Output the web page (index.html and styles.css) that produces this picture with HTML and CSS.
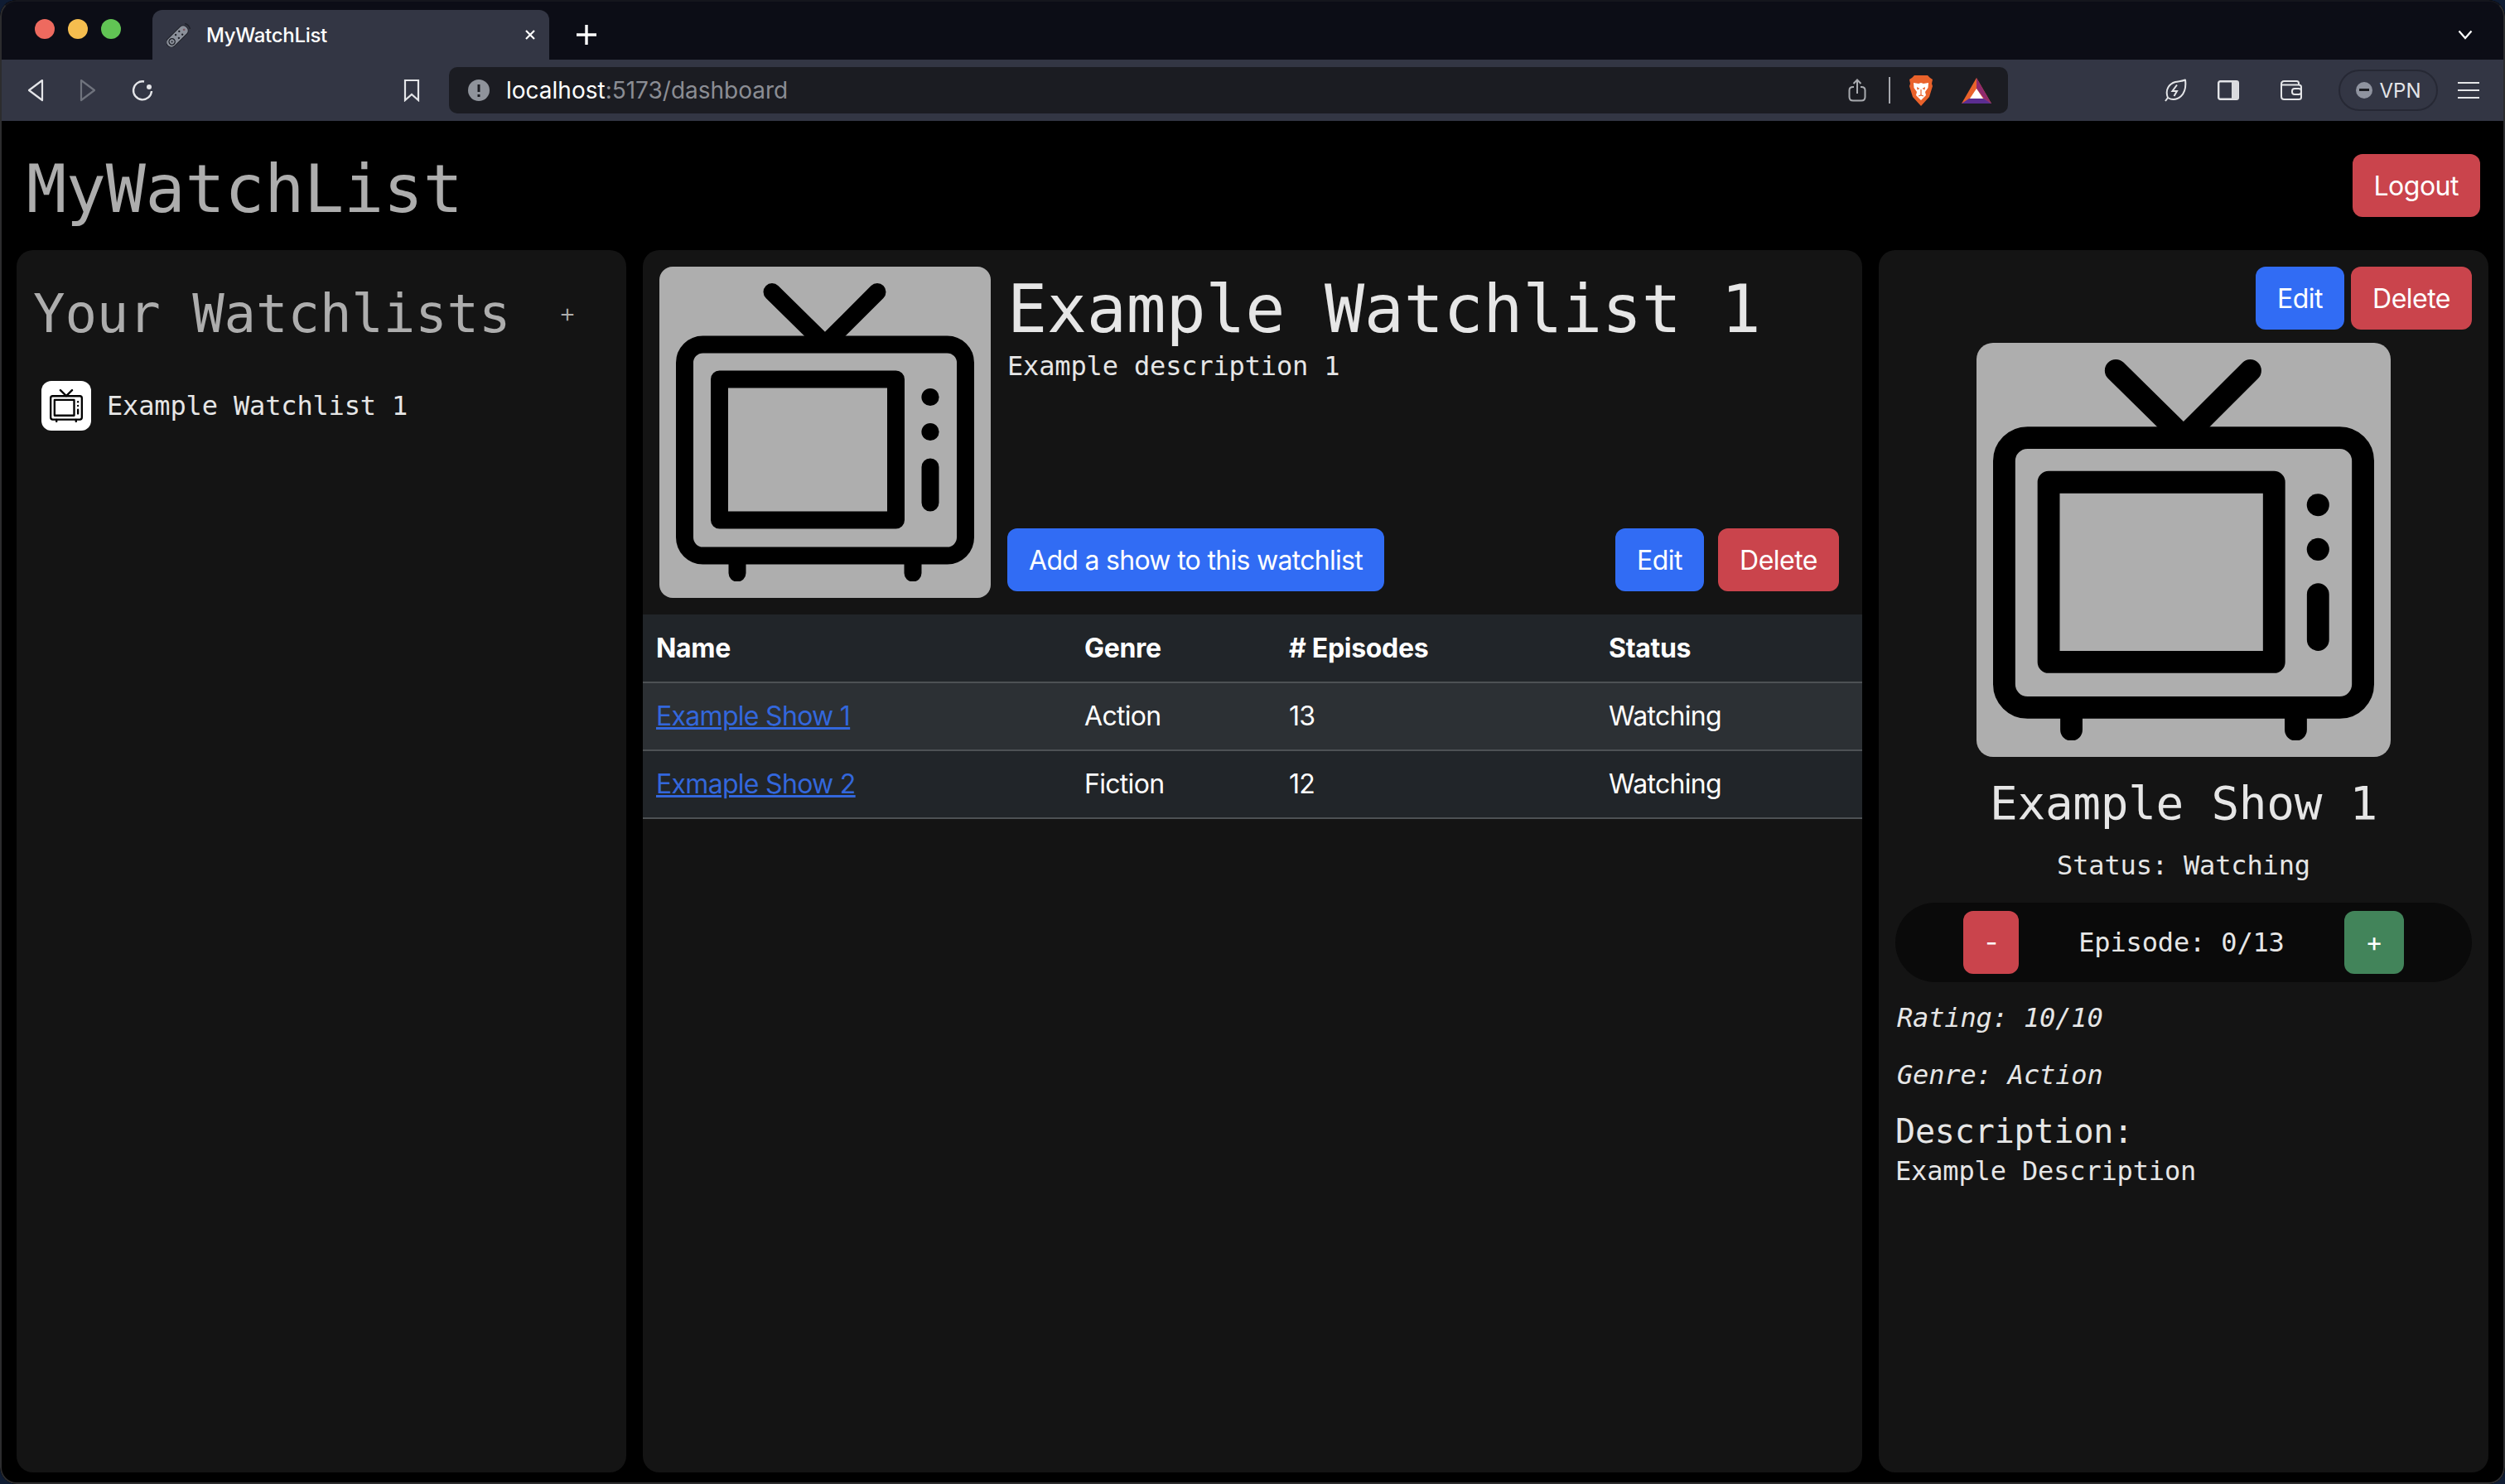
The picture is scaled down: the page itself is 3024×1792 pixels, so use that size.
FILE: index.html
```html
<!DOCTYPE html>
<html lang="en">

<head>
    <title>MyWatchList</title>
    <meta charset="utf-8">
    <link rel="stylesheet" href="styles.css">
</head>

<body>
    <svg class="defs" width="0" height="0">
        <symbol id="tv" viewBox="20 19.5 360 360">
            <g fill="none" stroke="#000" stroke-width="21" stroke-linecap="round" stroke-linejoin="round">
                <path d="M136 30 L200 93 L263 30" />
                <rect x="30.5" y="93.5" width="339" height="255" rx="22" />
                <rect x="72.5" y="135.5" width="213" height="170" />
                <path d="M327 241.5 V284.5 M94 352 V369.5 M306 352 V369.5" />
            </g>
            <circle cx="327" cy="157" r="10.6" />
            <circle cx="327" cy="199" r="10.6" />
        </symbol>
    </svg>

    <div class="window">
        <div class="tabstrip">
            <div class="lights">
                <span class="light red"></span>
                <span class="light yellow"></span>
                <span class="light green"></span>
            </div>
            <div class="tab">
                <svg class="tab-icon" width="30" height="30" viewBox="0 0 30 30">
                    <g transform="rotate(45 13 17)">
                        <rect x="7" y="1" width="12" height="32" rx="5.5" fill="#8b909a" stroke="#1f2129" stroke-width="1" />
                        <circle cx="13" cy="26" r="3.6" fill="none" stroke="#1f2129" stroke-width="1.4" />
                        <circle cx="13" cy="26" r="1" fill="#1f2129" />
                        <circle cx="10.3" cy="17" r="1.2" fill="#1f2129" />
                        <circle cx="15.7" cy="17" r="1.2" fill="#1f2129" />
                        <circle cx="10.3" cy="11" r="1.2" fill="#1f2129" />
                        <circle cx="15.7" cy="11" r="1.2" fill="#1f2129" />
                        <circle cx="13" cy="5.5" r="1.4" fill="#7a5560" />
                    </g>
                    <path d="M22 1.5 Q27 2.5 28.5 8" fill="none" stroke="#1f2129" stroke-width="1.4" />
                </svg>
                <span class="tab-title">MyWatchList</span>
                <svg class="tab-close" width="14" height="14" viewBox="0 0 14 14">
                    <path d="M2 2 L12 12 M12 2 L2 12" stroke="#fff" stroke-width="2.2" />
                </svg>
            </div>
            <svg class="new-tab" width="24" height="24" viewBox="0 0 24 24">
                <path d="M12 0 V24 M0 12 H24" stroke="#fff" stroke-width="3.4" />
            </svg>
            <svg class="tab-chevron" width="18" height="12" viewBox="0 0 18 12">
                <path d="M1.5 1.5 L9 10 L16.5 1.5" fill="none" stroke="#fff" stroke-width="2.2" />
            </svg>
        </div>

        <div class="toolbar">
            <div class="nav-buttons">
                <svg width="22" height="28" viewBox="0 0 22 28">
                    <path d="M19 2 L3 14 L19 26 Z" fill="none" stroke="#e4e5e8" stroke-width="2.2" stroke-linejoin="round" />
                </svg>
                <svg width="22" height="28" viewBox="0 0 22 28">
                    <path d="M3 2 L19 14 L3 26 Z" fill="none" stroke="#6f737d" stroke-width="2.2" stroke-linejoin="round" />
                </svg>
                <svg width="28" height="28" viewBox="0 0 28 28">
                    <path d="M16 3.5 A11 11 0 1 0 25 15" fill="none" stroke="#e4e5e8" stroke-width="2.4" />
                    <circle cx="22" cy="10" r="3" fill="#e4e5e8" />
                </svg>
            </div>
            <svg class="bookmark" width="20" height="28" viewBox="0 0 20 28">
                <path d="M2 2 H18 V26 L10 19 L2 26 Z" fill="none" stroke="#e4e5e8" stroke-width="2.2" />
            </svg>
            <div class="urlbar">
                <svg class="url-info" width="26" height="26" viewBox="0 0 26 26">
                    <circle cx="13" cy="13" r="13" fill="#8f939b" />
                    <path d="M13 6 V15 M13 18 V21" stroke="#1b1c22" stroke-width="3" />
                </svg>
                <span class="url"><span class="url-host">localhost</span>:5173/dashboard</span>
                <svg class="url-share" width="22" height="28" viewBox="0 0 22 28">
                    <path d="M7 10 H6 Q1.5 10 1.5 14 V22 Q1.5 26.5 6 26.5 H16 Q20.5 26.5 20.5 22 V14 Q20.5 10 16 10 H15 M11 18 V2 M6.5 6 L11 1.5 L15.5 6" fill="none" stroke="#a9abb0" stroke-width="2" />
                </svg>
                <span class="url-sep"></span>
                <svg class="url-brave" width="28" height="37" viewBox="0 0 28 37">
                    <path d="M6 0 H22 L25 3 L28 5 L27 10 L28 13 L24 26 L14 37 L4 26 L0 13 L1 10 L0 5 L3 3 Z" fill="#e9622b" />
                    <path d="M5 9 L11 10 L14 9 L17 10 L23 9 L22.5 15 L19 20 L20 24 L14 30 L8 24 L9 20 L5.5 15 Z" fill="#fff" />
                    <path d="M9 14 L12.5 16 L9.5 17.5 Z M19 14 L15.5 16 L18.5 17.5 Z" fill="#e9622b" />
                    <path d="M14 17 V24 M11 25 L14 24 L17 25" fill="none" stroke="#e9622b" stroke-width="1.2" />
                </svg>
                <svg class="url-bat" width="36" height="31" viewBox="0 0 36 31">
                    <path d="M18 0 L36 31 H0 Z" fill="#e9622b" />
                    <path d="M18 0 L36 31 L27 25 L18 13 Z" fill="#8f2a6e" />
                    <path d="M0 31 L9 25 H27 L36 31 Z" fill="#5b2d91" />
                    <path d="M18 13 L26 25 H10 Z" fill="#fff" />
                </svg>
            </div>
            <div class="tools">
                <svg class="tool-leaf" width="28" height="28" viewBox="0 0 28 28">
                    <path d="M2 27 L5 23 C1 13 7 6 14 4 C19 3 23 3 26 1.5 C27 9 26 16 21 21 C16 25.5 10 26 5 23" fill="none" stroke="#e4e5e8" stroke-width="2" stroke-linejoin="round" />
                    <path d="M16 7.5 L10.5 15 H16 L12.5 21" fill="none" stroke="#e4e5e8" stroke-width="2" />
                </svg>
                <svg class="tool-side" width="26" height="24" viewBox="0 0 26 24">
                    <rect x="1.2" y="1.2" width="23.6" height="21.6" rx="2" fill="none" stroke="#e4e5e8" stroke-width="2.4" />
                    <rect x="17" y="1.2" width="8" height="21.6" fill="#d9dade" />
                </svg>
                <svg class="tool-wallet" width="26" height="24" viewBox="0 0 26 24">
                    <path d="M22 5.5 V3.5 Q22 1 19.5 1 H4.5 Q1 1 1 4.5 V19.5 Q1 23 4.5 23 H22 Q25 23 25 20.5 V8 Q25 5.5 22 5.5 H1.5" fill="none" stroke="#e4e5e8" stroke-width="2" />
                    <rect x="14" y="10" width="11" height="7" rx="3" fill="none" stroke="#e4e5e8" stroke-width="2" />
                </svg>
                <div class="vpn">
                    <span class="vpn-dot"></span>
                    <span>VPN</span>
                </div>
                <svg class="tool-menu" width="28" height="22" viewBox="0 0 28 22">
                    <path d="M1 2 H27 M1 11 H27 M1 20 H27" stroke="#e4e5e8" stroke-width="2.2" />
                </svg>
            </div>
        </div>

        <header class="app-header">
            <h1>MyWatchList</h1>
            <button class="btn btn-danger">Logout</button>
        </header>

        <section class="panels">
            <nav class="panel side">
                <div class="side-head">
                    <h2>Your Watchlists</h2>
                    <span class="add-list">+</span>
                </div>
                <div class="list-item">
                    <span class="list-thumb"><svg width="40" height="40"><use href="#tv" /></svg></span>
                    <span>Example Watchlist 1</span>
                </div>
            </nav>

            <article class="panel main">
                <div class="list-head">
                    <div class="cover cover-md"><svg width="360" height="360"><use href="#tv" /></svg></div>
                    <div class="list-info">
                        <h1>Example Watchlist 1</h1>
                        <p>Example description 1</p>
                        <div class="list-actions">
                            <button class="btn btn-primary btn-wide">Add a show to this watchlist</button>
                            <div class="btn-pair">
                                <button class="btn btn-primary">Edit</button>
                                <button class="btn btn-danger">Delete</button>
                            </div>
                        </div>
                    </div>
                </div>
                <table class="shows">
                    <colgroup>
                        <col class="col-name">
                        <col class="col-genre">
                        <col class="col-eps">
                        <col>
                    </colgroup>
                    <thead>
                        <tr>
                            <th>Name</th>
                            <th>Genre</th>
                            <th># Episodes</th>
                            <th>Status</th>
                        </tr>
                    </thead>
                    <tbody>
                        <tr class="striped">
                            <td><a href="#">Example Show 1</a></td>
                            <td>Action</td>
                            <td>13</td>
                            <td>Watching</td>
                        </tr>
                        <tr>
                            <td><a href="#">Exmaple Show 2</a></td>
                            <td>Fiction</td>
                            <td>12</td>
                            <td>Watching</td>
                        </tr>
                    </tbody>
                </table>
            </article>

            <aside class="panel detail">
                <div class="detail-actions">
                    <button class="btn btn-primary">Edit</button>
                    <button class="btn btn-danger">Delete</button>
                </div>
                <div class="cover cover-lg"><svg width="460" height="460"><use href="#tv" /></svg></div>
                <h3>Example Show 1</h3>
                <p class="status">Status: Watching</p>
                <div class="episodes">
                    <button class="btn btn-danger btn-minus">-</button>
                    <span>Episode: 0/13</span>
                    <button class="btn btn-success btn-plus">+</button>
                </div>
                <p class="meta">Rating: 10/10</p>
                <p class="meta">Genre: Action</p>
                <h5>Description:</h5>
                <p class="desc">Example Description</p>
            </aside>
        </section>
        <div class="window-edge"></div>
    </div>
</body>

</html>
```

FILE: styles.css
```css
* {
    box-sizing: border-box;
}

html,
body {
    margin: 0;
    height: 100%;
    background: #0f1c33;
}

body {
    font-family: "DejaVu Sans Mono", monospace;
    font-size: 32px;
    letter-spacing: -0.15px;
    overflow: hidden;
}

.defs {
    position: absolute;
}

/* Browser window */
.window {
    position: relative;
    height: 1792px;
    display: flex;
    flex-direction: column;
    background: #000;
    border-radius: 20px;
    overflow: hidden;
}

.window-edge {
    position: absolute;
    inset: 0;
    border: 2px solid #2c2c2e;
    border-top-color: #15161d;
    border-radius: 20px;
    pointer-events: none;
}

.tabstrip {
    height: 72px;
    flex: none;
    display: flex;
    align-items: flex-end;
    position: relative;
    background: #0c0d16;
    font-family: Inter, sans-serif;
    letter-spacing: 0;
}

.lights {
    display: flex;
    gap: 16px;
    margin: 0 0 25px 42px;
}

.light {
    width: 24px;
    height: 24px;
    border-radius: 50%;
}

.red {
    background: #ee6a5f;
}

.yellow {
    background: #f5bd4f;
}

.green {
    background: #61c454;
}

.tab {
    width: 479px;
    height: 60px;
    margin-left: 38px;
    padding: 0 16px 0 17px;
    display: flex;
    align-items: center;
    background: #333644;
    border-radius: 12px 12px 0 0;
    color: #fff;
}

.tab-title {
    margin-left: 18px;
    flex: 1;
    font-size: 24px;
    font-weight: 500;
    letter-spacing: -0.3px;
}

.new-tab {
    margin: 0 0 18px 33px;
}

.tab-chevron {
    position: absolute;
    top: 36px;
    right: 39px;
}

.toolbar {
    height: 74px;
    flex: none;
    display: flex;
    align-items: center;
    background: #333644;
    font-family: Inter, sans-serif;
    letter-spacing: 0;
}

.nav-buttons {
    display: flex;
    align-items: center;
    gap: 41px;
    margin-left: 32px;
}

.bookmark {
    margin-left: 301px;
}

.urlbar {
    width: 1882px;
    height: 56px;
    margin-left: 35px;
    padding: 0 20px 0 23px;
    display: flex;
    align-items: center;
    background: #1b1c22;
    border-radius: 10px;
}

.url {
    flex: 1;
    margin-left: 20px;
    font-size: 28px;
    letter-spacing: 0;
    color: #8b8d94;
}

.url-host {
    color: #fff;
}

.url-sep {
    width: 2px;
    height: 32px;
    margin: 0 23px 0 27px;
    background: #a6a8ae;
}

.url-bat {
    margin-left: 35px;
}

.tools {
    display: flex;
    align-items: center;
    margin-left: 188px;
}

.tool-side {
    margin-left: 37px;
}

.tool-wallet {
    margin-left: 50px;
}

.vpn {
    width: 120px;
    height: 50px;
    margin-left: 44px;
    display: flex;
    align-items: center;
    justify-content: center;
    gap: 9px;
    border: 2px solid #262834;
    border-radius: 25px;
    font-size: 24px;
    color: #e4e5e8;
}

.tool-menu {
    margin-left: 23px;
}

.vpn-dot {
    width: 20px;
    height: 20px;
    border-radius: 50%;
    background: #8f939f;
    position: relative;
}

.vpn-dot::after {
    content: "";
    position: absolute;
    left: 4px;
    right: 4px;
    top: 8px;
    height: 3px;
    background: #1b1c22;
}

/* App */
.app-header {
    height: 156px;
    flex: none;
    display: flex;
    align-items: flex-start;
    justify-content: space-between;
    padding: 40px 30px 0 32px;
}

h1,
h2,
h3,
h5,
p {
    margin: 0;
    font-weight: 400;
}

.app-header h1 {
    margin-top: -5px;
    font-size: 80px;
    line-height: 96px;
    letter-spacing: -0.3px;
    color: #adadad;
}

.btn {
    height: 76px;
    padding: 13px 26px 11px;
    border: 0;
    border-radius: 12px;
    font-family: Inter, sans-serif;
    font-size: 32px;
    line-height: 48px;
    letter-spacing: -0.5px;
    color: #fff;
}

.btn-wide {
    letter-spacing: -0.7px;
}

.btn-primary {
    background: #316cf4;
}

.btn-danger {
    background: #ca444c;
}

.btn-success {
    background: #42845a;
}

.panels {
    flex: 1;
    display: flex;
    gap: 20px;
    padding: 0 20px 14px;
    min-height: 0;
}

.panel {
    background: #141414;
    border-radius: 20px;
    color: #e6e6e6;
    overflow: hidden;
}

.side,
.detail {
    width: 736px;
    flex: none;
}

.main {
    flex: 1;
}

/* Watchlists column */
.side {
    padding: 20px;
}

.side-head {
    display: flex;
    align-items: center;
    height: 80px;
    margin-top: 17px;
    margin-bottom: 41px;
    color: #adadad;
}

.side-head h2 {
    font-size: 64px;
    line-height: 80px;
    letter-spacing: -0.1px;
}

.add-list {
    margin: 0 0 4px 58px;
    font-family: Inter, sans-serif;
    font-weight: 300;
}

.list-item {
    display: flex;
    align-items: center;
    gap: 19px;
    padding-left: 10px;
}

.list-thumb {
    width: 60px;
    height: 60px;
    display: flex;
    align-items: center;
    justify-content: center;
    background: #fff;
    border-radius: 12px;
}

/* Middle column */
.list-head {
    height: 440px;
    padding: 20px;
    display: flex;
    gap: 20px;
}

.cover {
    flex: none;
    padding: 20px;
    background: #aeaeae;
    border-radius: 16px;
    overflow: hidden;
}

.cover svg {
    display: block;
}

.cover-md {
    width: 400px;
    height: 400px;
}

.list-info {
    flex: 1;
    display: flex;
    flex-direction: column;
    padding-bottom: 8px;
}

.list-info h1 {
    margin-top: 4px;
    font-size: 80px;
    line-height: 96px;
    letter-spacing: -0.3px;
}

.list-info p {
    margin-top: -4px;
    line-height: 48px;
}

.list-actions {
    margin-top: auto;
    display: flex;
    justify-content: space-between;
    padding-right: 8px;
}

.btn-pair {
    display: flex;
    gap: 17px;
}

.shows {
    width: 100%;
    table-layout: fixed;
    border-collapse: collapse;
    font-family: Inter, sans-serif;
    color: #fff;
    letter-spacing: -0.7px;
}

.col-name {
    width: 517px;
}

.col-genre {
    width: 247px;
}

.col-eps {
    width: 386px;
}

.shows th,
.shows td {
    height: 82px;
    padding: 16px;
    text-align: left;
    background: #212529;
    border-bottom: 2px solid #4d5154;
    line-height: 48px;
}

.shows th {
    font-weight: 700;
    letter-spacing: -0.3px;
}

.shows .striped td {
    background: #2c3034;
}

.shows a {
    color: #3367dc;
}

/* Show details column */
.detail {
    padding: 20px;
    text-align: center;
}

.detail-actions {
    display: flex;
    justify-content: flex-end;
    gap: 8px;
}

.cover-lg {
    width: 500px;
    height: 500px;
    margin: 16px auto 0;
    border-radius: 20px;
}

.detail h3 {
    margin-top: 22px;
    font-size: 56px;
    line-height: 67px;
    letter-spacing: -0.3px;
}

.status {
    margin-top: 18px;
    line-height: 48px;
}

.episodes {
    height: 96px;
    margin-top: 21px;
    display: flex;
    align-items: center;
    justify-content: center;
    gap: 72px;
    background: #0a0a0a;
    border-radius: 48px;
}

.btn-minus {
    width: 67px;
    padding: 0;
}

.btn-plus {
    width: 72px;
    padding: 0;
}

.meta {
    margin-top: 19px;
    padding-left: 2px;
    text-align: left;
    font-style: italic;
    line-height: 48px;
}

.meta + .meta {
    margin-top: 21px;
}

.detail h5 {
    margin-top: 20px;
    text-align: left;
    font-size: 40px;
    line-height: 48px;
}

.desc {
    text-align: left;
    line-height: 48px;
}
```
